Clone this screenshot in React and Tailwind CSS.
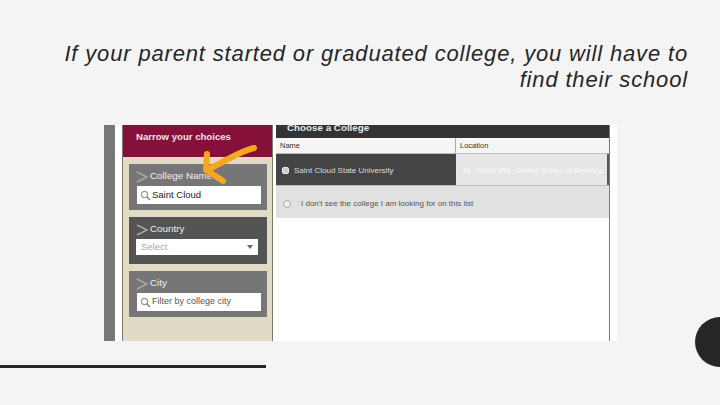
const font = { fontFamily: '"Liberation Sans", Arial, sans-serif' };

function Chevron() {
  return (
    <svg width="13" height="12" viewBox="0 0 13 12" className="shrink-0">
      <path d="M1 1 L11 6 L1 11" fill="none" stroke="#a8a8a8" strokeWidth="1.4" />
    </svg>
  );
}

function Lens() {
  return (
    <svg width="11" height="11" viewBox="0 0 11 11" className="shrink-0">
      <circle cx="4.5" cy="4.5" r="3.2" fill="none" stroke="#9a9a9a" strokeWidth="1.2" />
      <path d="M7 7 L10 10" stroke="#8a8a8a" strokeWidth="1.6" />
    </svg>
  );
}

function FilterBox({ title, bg, h, children }) {
  return (
    <div className={`w-[138px] flex flex-col pl-[8px] pt-[4px] ${bg} ${h}`}>
      <div className="flex items-center -ml-[1px] gap-[1px] h-[17px] text-[9.8px] text-[#eeeeee]">
        <Chevron />
        <span>{title}</span>
      </div>
      {children}
    </div>
  );
}

function SearchInput({ text, color, size }) {
  return (
    <div className={`mt-[1px] h-[18px] w-[124px] bg-white flex items-center pl-[3px] gap-[1px] ${size} ${color}`}>
      <Lens />
      <span>{text}</span>
    </div>
  );
}

export default function App() {
  return (
    <div className="relative w-[720px] h-[405px] overflow-hidden bg-[#f4f4f4]" style={font}>
      <div className="h-[125px] pr-[32px] pt-[41px] text-right italic text-[#262626] text-[22px] leading-[26px] tracking-[0.84px]">
        <p>If your parent started or graduated college, you will have to</p>
        <p>find their school</p>
      </div>

      <div className="ml-[104px] w-[513px] h-[216px] flex bg-white">
        <div className="w-[11px] bg-[#777777]" />
        <div className="w-[7px]" />
        <div className="w-[151px] bg-[#e1dbc6] border-x border-[#7a776c] flex flex-col">
          <div className="h-[32px] bg-[#85103a] text-[#f0e4e8] font-bold text-[9.6px] pl-[13px] pt-[5px]">
            Narrow your choices
          </div>
          <div className="flex flex-col gap-[7px] pl-[6px] pt-[7px]">
            <FilterBox title="College Name" bg="bg-[#767676]" h="h-[46px]">
              <SearchInput text="Saint Cloud" color="text-[#222222]" size="text-[9.5px]" />
            </FilterBox>
            <FilterBox title="Country" bg="bg-[#545454]" h="h-[47px]">
              <div className="mt-[1px] -ml-[1px] h-[16px] w-[122px] bg-white flex items-center justify-between pl-[5px] pr-[5px] text-[9.5px] text-[#a8a8a8]">
                <span>Select</span>
                <span className="w-0 h-0 border-x-[3px] border-x-transparent border-t-[4px] border-t-[#666666]" />
              </div>
            </FilterBox>
            <FilterBox title="City" bg="bg-[#767676]" h="h-[46px]">
              <SearchInput text="Filter by college city" color="text-[#555555]" size="text-[9px]" />
            </FilterBox>
          </div>
        </div>
        <div className="w-[3px]" />
        <div className="w-[334px] border-r border-[#7a7a7a] flex flex-col">
          <div className="h-[13px] bg-[#333333] text-[#e8e8e8] font-bold text-[9.8px] leading-[6px] pl-[11px] overflow-hidden">
            Choose a College
          </div>
          <div className="h-[16px] flex bg-[#f5f5f5] border-b border-[#bbbbbb] text-[7.5px] text-[#333333] leading-[15px]">
            <div className="w-[180px] pl-[4px] border-r border-[#aaaaaa]">Name</div>
            <div className="pl-[4px]">Location</div>
          </div>
          <div className="h-[32px] flex text-[8px] items-center border-b border-[#bbbbbb]">
            <div className="w-[180px] h-full bg-[#444444] text-[#dddddd] flex items-center pl-[6px] pt-[2px] gap-[5px]">
              <span className="w-[7px] h-[7px] rounded-[2px] bg-[#cccccc] border border-[#eeeeee]" />
              <span>Saint Cloud State University</span>
            </div>
            <div className="flex-1 h-full bg-[#e6e6e6] text-[#fbfbfb] flex items-center pl-[7px] pt-[2px] border-r-2 border-[#555555] whitespace-nowrap">
              St. Cloud MN, United States of America
            </div>
          </div>
          <div className="h-[32px] bg-[#e1e1e1] flex items-center pl-[7px] pt-[3px] text-[8px] text-[#555555]">
            <span className="w-[8px] h-[8px] rounded-full border border-[#aaaaaa] bg-[#eeeeee] mr-[10px]" />
            <span>I don't see the college I am looking for on this list</span>
          </div>
        </div>
      </div>

      <div className="mt-[24px] w-[266px] h-[3px] bg-[#262626]" />

      <div className="absolute left-[695px] top-[317px] w-[50px] h-[50px] rounded-full bg-[#262626]" />

      <svg className="absolute left-[195px] top-[140px]" width="70" height="50" viewBox="195 140 70 50" fill="none">
        <path
          d="M254 148 C240 151 228 160 207 170 M207 154 L206 170 L223 181"
          stroke="#f5a81f"
          strokeWidth="6"
          strokeLinecap="round"
          strokeLinejoin="round"
        />
      </svg>
    </div>
  );
}
